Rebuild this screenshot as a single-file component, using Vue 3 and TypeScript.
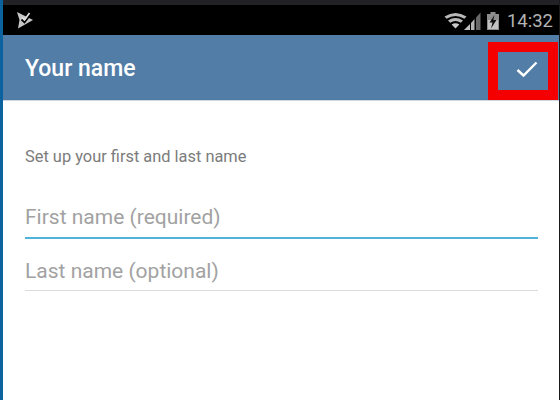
<template>
  <div class="screen">
    <div class="edge-left"></div>
    <div class="phone">
      <div class="top-strip"></div>
      <div class="status-bar">
        <svg class="notif" width="17" height="18" viewBox="0 0 17 18">
          <path d="M0 1 L16 9 L1 17.5 L2.5 9 Z" fill="#c6c6c6" />
          <path d="M4.5 8.5 L7.5 11.5 L12.5 5" fill="none" stroke="#000" stroke-width="1.8" />
          <path d="M5 6.5 L7.5 8.8 L12.5 2" fill="none" stroke="#e2e2e2" stroke-width="1.6" />
        </svg>
        <div class="status-right">
          <svg width="23" height="17" viewBox="0 0 23 17">
            <path d="M0.5 4.5 Q11.5 -2.5 22.5 4.5 L20.4 6.8 Q11.5 1 2.6 6.8 Z" fill="#b9b9b9" />
            <path d="M4 8.4 Q11.5 3.6 19 8.4 L16.8 10.8 Q11.5 7.4 6.2 10.8 Z" fill="#b9b9b9" />
            <path d="M7.6 12.4 Q11.5 10 15.4 12.4 L11.5 16.6 Z" fill="#c8c8c8" />
          </svg>
          <svg class="signal" width="17" height="18" viewBox="0 0 17 18">
            <path d="M0 18 L6 18 L6 12 Z" fill="#c0c0c0" />
            <path d="M7 18 L10.5 18 L10.5 7 L7 11 Z" fill="#b4b4b4" />
            <path d="M12 18 L16.5 18 L16.5 0.5 L12 5.5 Z" fill="#686868" />
          </svg>
          <svg class="battery" width="12" height="18" viewBox="0 0 12 18">
            <path d="M3.5 0 H8.5 V2 H12 V18 H0 V2 H3.5 Z" fill="#8c8c8c" />
            <path d="M1 8 H11 V17 H1 Z" fill="#c2c2c2" />
            <path d="M7.5 3 L2.5 10.5 H5.5 L4 16.5 L9.5 8 H6.3 Z" fill="#111" />
          </svg>
          <span class="clock">14:32</span>
        </div>
      </div>
      <header class="app-bar">
        <h1 class="title">Your name</h1>
        <div class="highlight">
          <svg class="check" width="22" height="17" viewBox="0 0 22 17">
            <path d="M1.5 9 L7.5 14.5 L20.5 1.5" fill="none" stroke="#fff" stroke-width="2.4" />
          </svg>
        </div>
      </header>
      <main class="form">
        <p class="hint">Set up your first and last name</p>
        <div class="field active">First name (required)</div>
        <div class="field">Last name (optional)</div>
      </main>
    </div>
    <div class="edge-right"></div>
  </div>
</template>

<script setup lang="ts">
</script>

<style scoped>
.screen {
  display: flex;
  width: 560px;
  height: 400px;
  overflow: hidden;
  background: #fff;
  font-family: Roboto, "Liberation Sans", sans-serif;
}

.edge-left {
  width: 3px;
  background: #0b629f;
}

.edge-right {
  width: 1px;
  background: #1a1a1a;
}

.phone {
  flex: 1;
  display: flex;
  flex-direction: column;
  min-width: 0;
}

.top-strip {
  height: 5px;
  background: #212126;
}

.status-bar {
  height: 30px;
  background: #000;
  display: flex;
  align-items: center;
  justify-content: space-between;
  padding: 0 6px 0 14px;
}

.status-right {
  display: flex;
  align-items: center;
}

.signal {
  margin-left: -3px;
  margin-top: 1px;
}

.battery {
  margin-left: 6px;
  margin-top: 1px;
}

.clock {
  margin-left: 8px;
  color: #b4b4b4;
  font-size: 18.5px;
  line-height: 30px;
  margin-top: 1px;
}

.app-bar {
  height: 66px;
  box-sizing: border-box;
  background: #527da7;
  border-bottom: 1px solid #cfd6dd;
  display: flex;
  align-items: flex-end;
  justify-content: space-between;
  padding-right: 1px;
}

.title {
  margin: 0 0 17px 22px;
  color: #fff;
  font-size: 23px;
  line-height: 28px;
  font-weight: 500;
}

.highlight {
  width: 70px;
  height: 58px;
  box-sizing: border-box;
  border: 10px solid #f40000;
  display: flex;
  align-items: center;
  justify-content: center;
  padding: 0 0 3px 8px;
}

.form {
  padding: 46px 21px 0 22px;
}

.hint {
  margin: 0 0 33px;
  color: #7c7c7c;
  font-size: 16.4px;
  line-height: 20px;
}

.field {
  height: 37px;
  box-sizing: border-box;
  margin-bottom: 17px;
  color: #a2a2a2;
  font-size: 21px;
  line-height: 34px;
  border-bottom: 1px solid #dcdcdc;
}

.field.active {
  height: 39px;
  margin-bottom: 15px;
  border-bottom: 2px solid #4fb3dd;
}
</style>
